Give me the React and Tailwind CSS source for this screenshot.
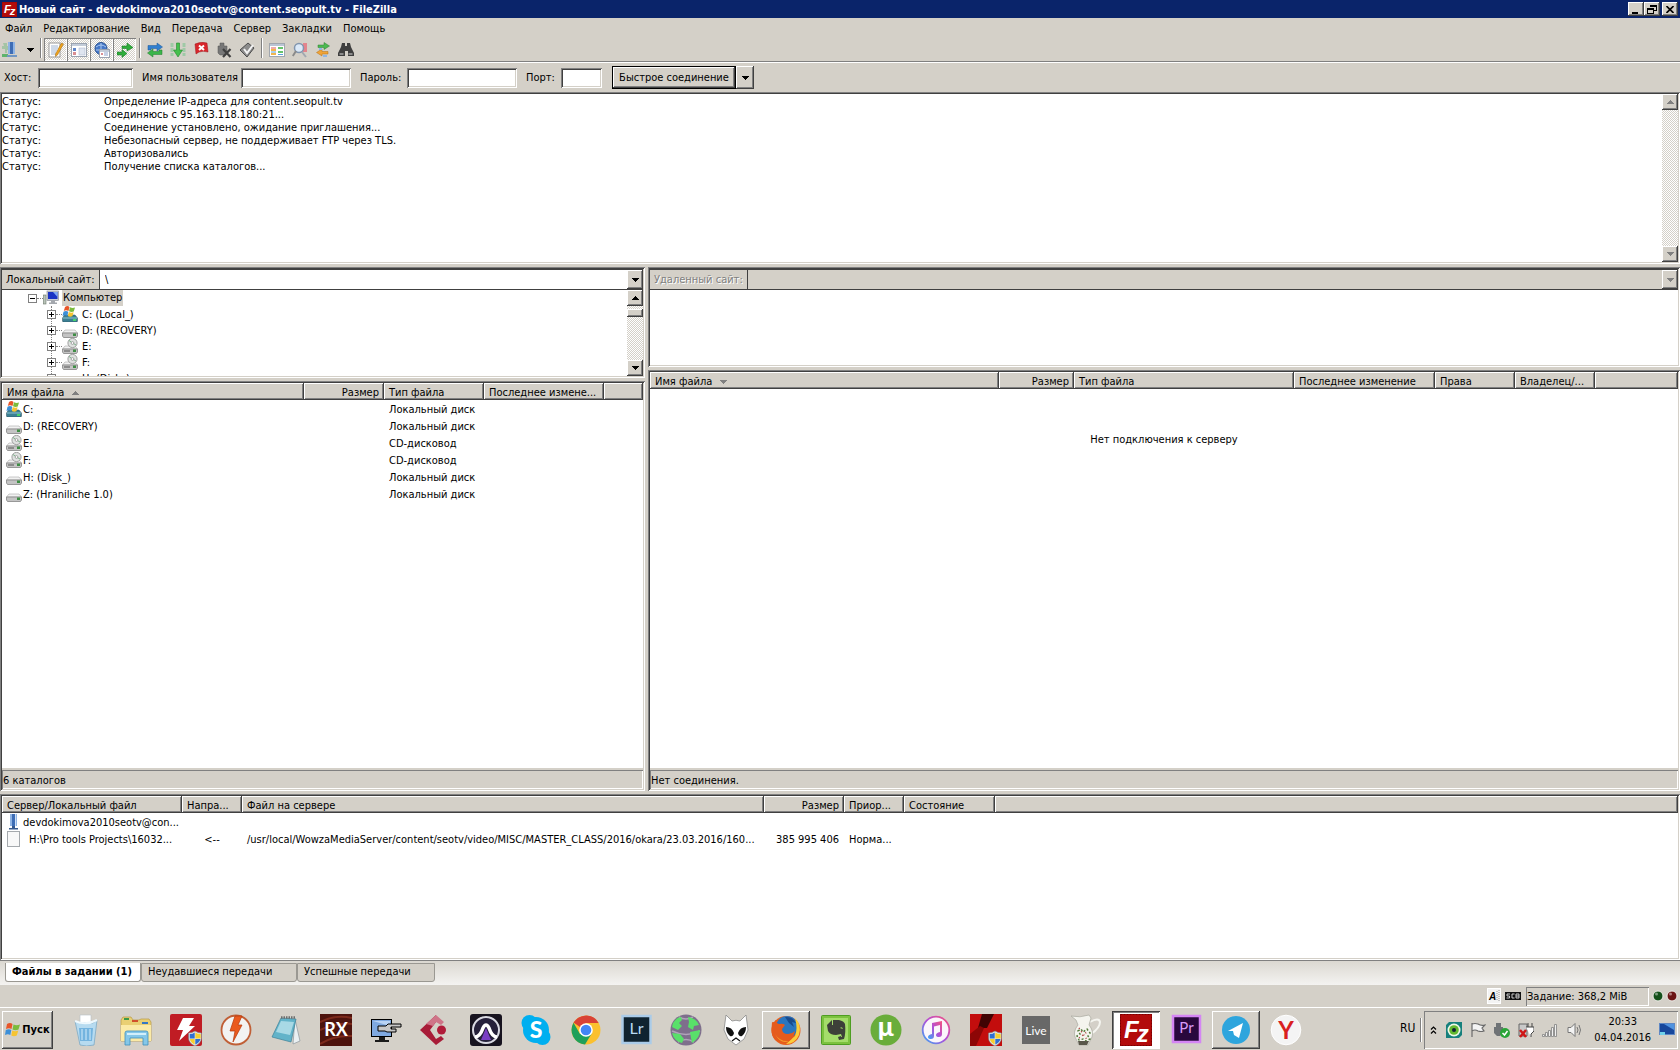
import { useState } from 'react';

const sunken = 'p-[2px] shadow-[inset_1px_1px_0_#808080,inset_-1px_-1px_0_#fff,inset_2px_2px_0_#404040,inset_-2px_-2px_0_#d4d0c8]';
const thinSunken = 'shadow-[inset_1px_1px_0_#808080,inset_-1px_-1px_0_#fff]';
const raised = 'bg-[#d4d0c8] shadow-[inset_-1px_-1px_0_#404040,inset_1px_1px_0_#fff,inset_-2px_-2px_0_#808080]';
const dither = 'bg-[conic-gradient(#fff_25%,#d4d0c8_0_50%,#fff_0_75%,#d4d0c8_0)] bg-[size:2px_2px]';

const menuItems = ['Файл', 'Редактирование', 'Вид', 'Передача', 'Сервер', 'Закладки', 'Помощь'];

const logLines = [
  'Определение IP-адреса для content.seopult.tv',
  'Соединяюсь с 95.163.118.180:21...',
  'Соединение установлено, ожидание приглашения...',
  'Небезопасный сервер, не поддерживает FTP через TLS.',
  'Авторизовались',
  'Получение списка каталогов...',
];

const drives = [
  { name: 'C:', type: 'Локальный диск', icon: 'system' },
  { name: 'D: (RECOVERY)', type: 'Локальный диск', icon: 'disk' },
  { name: 'E:', type: 'CD-дисковод', icon: 'cd' },
  { name: 'F:', type: 'CD-дисковод', icon: 'cd' },
  { name: 'H: (Disk_)', type: 'Локальный диск', icon: 'disk' },
  { name: 'Z: (Hraniliche 1.0)', type: 'Локальный диск', icon: 'disk' },
];

const treeDrives = [
  { name: 'C: (Local_)', icon: 'system' },
  { name: 'D: (RECOVERY)', icon: 'disk' },
  { name: 'E:', icon: 'cd' },
  { name: 'F:', icon: 'cd' },
  { name: 'H: (Disk_)', icon: 'disk' },
];

/* ---------- small icons ---------- */

const Icon16 = ({ children }) => (
  <svg width="16" height="16" viewBox="0 0 16 16" className="block shrink-0" aria-hidden="true">{children}</svg>
);

const DriveIcon = ({ kind }) => (
  <Icon16>
    {kind === 'system' && (
      <g>
        <path d="M.5 12l2-3h10.500l2.500 3v3l-.5 1h-14l-.5-1z" fill="#3b7f93" stroke="#2d4c58" strokeWidth=".5" />
        <path d="M1 12h14" stroke="#8ec6d4" />
        <rect x="11" y="13" width="3" height="2" fill="#45d36b" />
        <path d="M3 1q2.500-2 4.500 0L6.500 5Q4 3.500 1.800 5z" fill="#e8562a" />
        <path d="M8 1.300q2.500 1.200 5 .2l-1.200 4q-2.300 1-4.800-.2z" fill="#7cbb3c" />
        <path d="M1.500 5.800q2.500-1.500 4.800 0l-1 4.200Q3 8.500.5 10z" fill="#3c8fd8" />
        <path d="M6.800 6q2.500 1.200 4.800.2l-1.200 4q-2.400 1-4.600-.2z" fill="#f6c431" />
      </g>
    )}
    {kind !== 'system' && (
      <g>
        <path d="M.5 11l2.500-3h10l2.500 3z" fill="#f1f1f1" stroke="#a8a8a8" strokeWidth=".6" />
        <path d="M.5 11h15v3l-1 1.500h-13l-1-1.500z" fill="#c4c4c4" stroke="#858585" strokeWidth=".8" />
        <rect x="11" y="11.500" width="3" height="2.500" fill="#3f8e45" />
      </g>
    )}
    {kind === 'cd' && (
      <g>
        <circle cx="10.500" cy="5" r="4.600" fill="#dfe2e0" stroke="#8d8d8d" strokeWidth=".8" />
        <path d="M10.500 5L7 2.500M10.500 5l3.500 2" stroke="#7db38a" />
        <circle cx="10.500" cy="5" r="1.400" fill="#fff" stroke="#777" strokeWidth=".6" />
        <path d="M2 13h6" stroke="#555" />
      </g>
    )}
  </Icon16>
);

const ServerIcon = () => (
  <Icon16>
    <path d="M4 0h7v12H4z" fill="#8fb4e4" />
    <path d="M6 0h3v12H6z" fill="#3e6db5" />
    <path d="M9 0h1v12H9z" fill="#cfe0f6" />
    <path d="M6 12h3v2H6zM3 14h9v1.500H3z" fill="#35598f" />
  </Icon16>
);

const SiteManagerIcon = () => (
  <Icon16>
    <path d="M1 1h4v3h3v4h-3v3H3V7H0V4h2z" fill="#a4c4a4" />
    <path d="M0 12h6v3H0z" fill="#5fb36b" />
    <path d="M6 0h7v12H6z" fill="#8fb4e4" />
    <path d="M8 0h3v12H8z" fill="#3e6db5" />
    <path d="M5 13h10v2H5z" fill="#6f96c4" />
  </Icon16>
);

const ComputerIcon = () => (
  <Icon16>
    <rect x="0.500" y="5" width="2.500" height="9" fill="#b9c4b9" stroke="#6c786c" strokeWidth=".6" />
    <rect x="4" y="1" width="11.500" height="9.500" fill="#c8ccd4" stroke="#80858e" strokeWidth=".6" />
    <rect x="5" y="2" width="9.500" height="7" fill="#1a33c4" />
    <path d="M10 2h4.500v5z" fill="#7fa8f2" />
    <path d="M8 10.500h4v2h2v1.500H6v-1.500h2z" fill="#a4a8ae" />
  </Icon16>
);

const FzLogo = ({ size }) => (
  <svg width={size} height={size} viewBox="0 0 32 32" className="block shrink-0" aria-hidden="true">
    <rect width="32" height="32" fill="#b30b0b" />
    <rect x=".5" y=".5" width="31" height="31" fill="none" stroke="#7a0000" strokeDasharray="2 1" />
    <text x="4" y="24" fill="#fff" fontFamily="Liberation Sans, sans-serif" fontWeight="700" fontStyle="italic" fontSize="24">
      F<tspan dx="-2" dy="4">z</tspan>
    </text>
  </svg>
);

const toggles = [
  {
    label: 'Журнал',
    icon: (
      <Icon16>
        <rect x="1" y="1" width="11" height="14" fill="#fff" stroke="#9a9a9a" />
        <path d="M3 4h7M3 6h7M3 8h6M3 10h5M3 12h5" stroke="#9fb4d2" />
        <path d="M13.500 1l2 1-6 11-2 1.500v-2.500z" fill="#f0a41c" stroke="#9a6410" strokeWidth=".5" />
      </Icon16>
    ),
  },
  {
    label: 'Локальное дерево',
    icon: (
      <Icon16>
        <rect x=".5" y="1.500" width="15" height="13" fill="#fff" stroke="#9aa3b0" />
        <path d="M1 2h14v2H1z" fill="#c3ccd9" />
        <rect x="2" y="6" width="3" height="3" fill="#5f86c9" />
        <rect x="2" y="10" width="3" height="3" fill="#d98e92" />
        <rect x="8" y="6" width="6" height="7" fill="#dfe5f0" stroke="#a3b0c9" strokeWidth=".5" />
      </Icon16>
    ),
  },
  {
    label: 'Удаленное дерево',
    icon: (
      <Icon16>
        <circle cx="7" cy="6.500" r="6" fill="#4678c8" stroke="#27508f" />
        <path d="M2 5q5-4 10 0M2 8h10M7 1v11" stroke="#a9c8f0" fill="none" />
        <rect x="5.500" y="7.500" width="10" height="8" fill="#fff" stroke="#9aa3b0" />
        <path d="M6 8h9v2H6z" fill="#c3ccd9" />
        <path d="M10 11h4M10 13h4" stroke="#8ba2cc" />
        <path d="M7 11h2v2H7z" fill="#d98e92" />
      </Icon16>
    ),
  },
  {
    label: 'Очередь',
    icon: (
      <Icon16>
        <path d="M5 4h5V1l6 4.500L10 9V6.500H5z" fill="#2fae3b" stroke="#1b7a27" strokeWidth=".6" />
        <path d="M0 10h5V7.500l5 4-5 4V13H0z" fill="#2fae3b" stroke="#1b7a27" strokeWidth=".6" />
      </Icon16>
    ),
  },
];

const transferTools = [
  {
    label: 'Обновить',
    icon: (
      <Icon16>
        <path d="M1 8V3.500h9V1l5.500 4L10 9V6.500H4V8z" fill="#2f7fd0" stroke="#1b5697" strokeWidth=".5" />
        <path d="M15 8v4.500H6V15L.5 11 6 7v2.500h6V8z" fill="#3bb54a" stroke="#237a2e" strokeWidth=".5" />
      </Icon16>
    ),
  },
  {
    label: 'Обработка очереди',
    icon: (
      <Icon16>
        <path d="M2 1v13M14 1v13" stroke="#9fc9a6" strokeWidth="3" strokeDasharray="4 1" />
        <path d="M6.500 1h3v7h3L8 15 3.500 8h3z" fill="#45bf4c" stroke="#23872c" strokeWidth=".6" />
      </Icon16>
    ),
  },
  {
    label: 'Отменить',
    icon: (
      <Icon16>
        <path d="M2 2q6-3 12-1l1 9q-5-1.500-9 0l-3 2z" fill="#d8262c" stroke="#9d1218" strokeWidth=".5" />
        <path d="M6 3.500l5 4.500M11 3.500L6 8" stroke="#fff" strokeWidth="2" />
      </Icon16>
    ),
  },
  {
    label: 'Отключиться',
    icon: (
      <Icon16>
        <path d="M4 1h4v3h3v6l-3 3H4l-2-2V4h2z" fill="#777" stroke="#555" strokeWidth=".5" />
        <path d="M7 7l7.500 8M14.500 7L7 15" stroke="#3f3f3f" strokeWidth="2.200" />
      </Icon16>
    ),
  },
  {
    label: 'Переподключиться',
    icon: (
      <Icon16>
        <path d="M1 8l8-7 6 5-7 9z" fill="#8c8c8c" stroke="#4b4b4b" />
        <path d="M5 7l3 4 6-8" stroke="#f3f3f3" strokeWidth="2" fill="none" />
      </Icon16>
    ),
  },
];

const viewTools = [
  {
    label: 'Фильтр',
    icon: (
      <Icon16>
        <rect x=".5" y="1.500" width="15" height="13" fill="#fff" stroke="#a0a6ae" />
        <path d="M1 3h14" stroke="#b9c4d4" strokeWidth="2" />
        <path d="M2 6h5" stroke="#e05656" />
        <path d="M2 8h5M2 12h5" stroke="#f0b64c" strokeWidth="2" />
        <path d="M9 6h5M9 10h5" stroke="#65c46c" strokeWidth="2" />
        <path d="M2 10h5M9 12.500h5" stroke="#5aa2dc" />
      </Icon16>
    ),
  },
  {
    label: 'Сравнение каталогов',
    icon: (
      <Icon16>
        <path d="M11 1h4v9h-4z" fill="#e3848c" />
        <circle cx="7" cy="6" r="4.500" fill="#dbe9f8" stroke="#8195ae" strokeWidth="1.500" />
        <path d="M4 9L.8 14" stroke="#8a8a8a" strokeWidth="2" />
        <path d="M10 10l4 5" stroke="#a2a8b0" strokeWidth="2" />
      </Icon16>
    ),
  },
  {
    label: 'Синхронный просмотр',
    icon: (
      <Icon16>
        <path d="M3 3h6V.5L14.500 4 9 7.500V5.500H3z" fill="#4cb951" stroke="#2d8133" strokeWidth=".5" />
        <path d="M13 9.500H7V7L1.500 10.500 7 14v-2h6z" fill="#f0a437" stroke="#b3701a" strokeWidth=".5" />
        <path d="M4 6h3v2H4zM8 13h4v2H8z" fill="#8fb6e6" />
      </Icon16>
    ),
  },
  {
    label: 'Поиск файлов',
    icon: (
      <Icon16>
        <path d="M4 1h3v3h2V1h3l1 4 3 6v3h-6V9H7v5H0v-3l3-6z" fill="#3f3f3f" />
        <path d="M1.500 11h4v2h-4zM10.500 11h4v2h-4z" fill="#8b8b8b" />
      </Icon16>
    ),
  },
];

/* ---------- common pieces ---------- */

const Triangle = ({ up, disabled }) => (
  <svg width="7" height="4" viewBox="0 0 7 4" className="block" aria-hidden="true" shapeRendering="crispEdges">
    <path d={up ? 'M0 4h7L3.500 0z' : 'M0 0h7L3.500 4z'} fill={disabled ? '#808080' : '#000'} />
  </svg>
);

const ArrowButton = ({ up, disabled, label, className = 'h-4' }) => (
  <button aria-label={label} disabled={disabled} className={`flex w-4 shrink-0 items-center justify-center ${raised} ${className}`}>
    <Triangle up={up} disabled={disabled} />
  </button>
);

const ToolButton = ({ label, icon, toggled }) => (
  <button
    aria-label={label}
    title={label}
    className={`flex h-[23px] w-[23px] items-center justify-center ${toggled ? `${dither} ${thinSunken}` : ''}`}
  >
    {icon}
  </button>
);

const ToolSeparator = () => (
  <div className="flex h-5 w-[7px] justify-center" aria-hidden="true">
    <div className="w-[2px] border-r border-l border-r-white border-l-[#808080]" />
  </div>
);

const HeaderRow = ({ columns }) => (
  <>
    <colgroup>
      {columns.map((col) => (
        <col key={col.key} className={col.width} />
      ))}
    </colgroup>
    <thead>
      <tr>
        {columns.map((col) => (
          <th key={col.key} className={`h-[17px] truncate px-[5px] pt-px font-normal ${raised} ${col.right ? 'text-right' : 'text-left'}`}>
            {col.title}
            {col.sort && (
              <span className="ml-2 inline-block align-middle">
                <Triangle up={col.sort === 'asc'} disabled />
              </span>
            )}
          </th>
        ))}
      </tr>
    </thead>
  </>
);

const AddressBar = ({ id, label, value, disabled }) => (
  <div className="flex h-[21px] shrink-0 border-t border-b border-[#404040] bg-[#d4d0c8]">
    <label
      htmlFor={id}
      className={`flex w-[98px] shrink-0 items-center border-r border-[#404040] pl-1 whitespace-nowrap ${disabled ? 'text-[#808080] [text-shadow:1px_1px_0_#fff]' : ''}`}
    >
      {label}
    </label>
    <input id={id} defaultValue={value} disabled={disabled} className={`min-w-0 flex-1 px-[5px] outline-none ${disabled ? 'bg-[#d4d0c8]' : 'bg-white'}`} />
    <ArrowButton label="Открыть список" disabled={disabled} className="h-[19px]" />
  </div>
);

const PaneStatus = ({ children }) => (
  <div className="shrink-0 bg-[#d4d0c8] pt-[2px]">
    <div className={`flex h-[19px] items-center pt-px pl-px ${thinSunken}`}>{children}</div>
  </div>
);

/* ---------- window parts ---------- */

const TitleBar = () => (
  <header className="flex h-[18px] shrink-0 items-center bg-[#0a246a] pr-[2px] pl-[2px] text-white">
    <FzLogo size={15} />
    <h1 className="ml-[2px] flex-1 truncate font-bold">Новый сайт - devdokimova2010seotv@content.seopult.tv - FileZilla</h1>
    <button aria-label="Свернуть" className={`flex h-[14px] w-4 items-center justify-center ${raised}`}>
      <svg width="10" height="9"><path d="M1 7h6v2H1z" /></svg>
    </button>
    <button aria-label="Восстановить" className={`flex h-[14px] w-4 items-center justify-center ${raised}`}>
      <svg width="10" height="9" fill="none" stroke="#000" shapeRendering="crispEdges"><path d="M3 0v2M3 .5h6v5H7M3 1.500h6M.5 3.500h6v5h-6zM1 4.500h6" /></svg>
    </button>
    <button aria-label="Закрыть" className={`ml-[2px] flex h-[14px] w-4 items-center justify-center ${raised}`}>
      <svg width="8" height="7" stroke="#000" strokeWidth="1.600"><path d="M.5 0l7 7M7.500 0l-7 7" /></svg>
    </button>
  </header>
);

const MenuBar = () => (
  <nav className="flex h-5 shrink-0 items-center gap-[11px] pl-[5px]">
    {menuItems.map((item) => (
      <button key={item}>{item}</button>
    ))}
  </nav>
);

const Toolbar = () => (
  <div className="flex h-[25px] shrink-0 items-start border-b border-white shadow-[inset_0_-1px_0_#808080]">
    <button aria-label="Менеджер сайтов" className="flex h-[23px] w-5 items-center justify-center"><SiteManagerIcon /></button>
    <button aria-label="Список сайтов" className="flex h-[23px] w-[17px] items-center justify-center pl-1"><Triangle /></button>
    <ToolSeparator />
    {toggles.map((tool) => <ToolButton key={tool.label} toggled {...tool} />)}
    <ToolSeparator />
    {transferTools.map((tool) => <ToolButton key={tool.label} {...tool} />)}
    <ToolSeparator />
    {viewTools.map((tool) => <ToolButton key={tool.label} {...tool} />)}
  </div>
);

const quickField = `h-5 bg-white px-1 outline-none ${sunken}`;

const QuickConnect = () => (
  <form className="flex h-[29px] shrink-0 items-center pl-1 whitespace-nowrap" onSubmit={(e) => e.preventDefault()}>
    <label htmlFor="host" className="w-[34px]">Хост:</label>
    <input id="host" className={`mr-[9px] w-[95px] ${quickField}`} />
    <label htmlFor="user" className="w-[99px]">Имя пользователя</label>
    <input id="user" className={`mr-[9px] w-[110px] ${quickField}`} />
    <label htmlFor="pass" className="w-[47px]">Пароль:</label>
    <input id="pass" type="password" className={`mr-[9px] w-[110px] ${quickField}`} />
    <label htmlFor="port" className="w-[35px]">Порт:</label>
    <input id="port" className={`mr-[10px] w-[41px] ${quickField}`} />
    <button className="h-[23px] w-[124px] border border-black bg-[#d4d0c8] shadow-[inset_-1px_-1px_0_#404040,inset_1px_1px_0_#fff,inset_-2px_-2px_0_#808080]">Быстрое соединение</button>
    <button type="button" aria-label="История соединений" className={`flex h-[23px] w-[18px] items-center justify-center ${raised}`}><Triangle /></button>
  </form>
);

const MessageLog = () => (
  <section className={`flex h-[172px] shrink-0 bg-white ${sunken}`}>
    <ul className="flex-1 pt-px">
      {logLines.map((line) => (
        <li key={line} className="grid grid-cols-[102px_1fr]">
          <span>Статус:</span>
          <span>{line}</span>
        </li>
      ))}
    </ul>
    <div className={`flex w-4 flex-col justify-between ${dither}`}>
      <ArrowButton up disabled label="Прокрутить вверх" />
      <ArrowButton disabled label="Прокрутить вниз" />
    </div>
  </section>
);

const Expander = ({ open, label }) => (
  <button aria-label={label} className="h-[9px] w-[9px] shrink-0">
    <svg width="9" height="9" className="block" shapeRendering="crispEdges">
      <rect x=".5" y=".5" width="8" height="8" fill="#fff" stroke="#808080" />
      <path d={open ? 'M2 4h5v1H2z' : 'M2 4h5v1H2zM4 2h1v5H4z'} />
    </svg>
  </button>
);

const LocalTree = () => (
  <section className={`flex h-[111px] shrink-0 flex-col bg-white ${sunken}`}>
    <AddressBar id="local-path" label="Локальный сайт:" value="\" />
    <div className="flex min-h-0 flex-1">
      <ul className="flex-1 overflow-hidden">
        <li>
          <div className="flex h-4 items-center pl-[26px]">
            <Expander open label="Свернуть Компьютер" />
            <span className="w-[6px] border-t border-dotted border-[#808080]" />
            <ComputerIcon />
            <span className="ml-[3px] h-4 bg-[#d4d0c8] px-px leading-4">Компьютер</span>
          </div>
          <ul className="ml-[49px] border-l border-dotted border-[#808080]">
            {treeDrives.map((drive) => (
              <li key={drive.name} className="-ml-[5px] flex h-4 items-center">
                <Expander label={`Развернуть ${drive.name}`} />
                <span className="w-[6px] border-t border-dotted border-[#808080]" />
                <DriveIcon kind={drive.icon} />
                <span className="ml-1">{drive.name}</span>
              </li>
            ))}
          </ul>
        </li>
      </ul>
      <div className={`flex w-4 flex-col ${dither}`}>
        <ArrowButton up label="Прокрутить вверх" />
        <div className={`mt-[3px] mb-auto h-2 ${raised}`} />
        <ArrowButton label="Прокрутить вниз" />
      </div>
    </div>
  </section>
);

const LocalList = () => (
  <section className={`flex min-h-0 flex-1 flex-col bg-white ${sunken}`}>
    <div className="min-h-0 flex-1 overflow-hidden">
      <table className="w-full table-fixed">
        <HeaderRow
          columns={[
            { key: 'name', title: 'Имя файла', width: 'w-[302px]', sort: 'asc' },
            { key: 'size', title: 'Размер', width: 'w-[80px]', right: true },
            { key: 'type', title: 'Тип файла', width: 'w-[100px]' },
            { key: 'date', title: 'Последнее измене...', width: 'w-[120px]' },
            { key: 'rest', title: '', width: '' },
          ]}
        />
        <tbody>
          {drives.map((drive) => (
            <tr key={drive.name} className="h-[17px]">
              <td className="pt-px pl-1">
                <div className="flex items-center gap-px">
                  <DriveIcon kind={drive.icon} />
                  {drive.name}
                </div>
              </td>
              <td />
              <td className="pt-px pl-[5px]">{drive.type}</td>
              <td />
              <td />
            </tr>
          ))}
        </tbody>
      </table>
    </div>
    <PaneStatus>6 каталогов</PaneStatus>
  </section>
);

const RemotePanel = () => (
  <div className="flex min-w-0 flex-col gap-[3px]">
    <section className={`h-[100px] shrink-0 bg-white ${sunken}`}>
      <AddressBar id="remote-path" label="Удаленный сайт:" disabled />
    </section>
    <section className={`flex min-h-0 flex-1 flex-col bg-white ${sunken}`}>
      <div className="min-h-0 flex-1 overflow-hidden">
        <table className="w-full table-fixed">
          <HeaderRow
            columns={[
              { key: 'name', title: 'Имя файла', width: 'w-[349px]', sort: 'desc' },
              { key: 'size', title: 'Размер', width: 'w-[75px]', right: true },
              { key: 'type', title: 'Тип файла', width: 'w-[220px]' },
              { key: 'date', title: 'Последнее изменение', width: 'w-[141px]' },
              { key: 'mode', title: 'Права', width: 'w-[80px]' },
              { key: 'owner', title: 'Владелец/...', width: 'w-[80px]' },
              { key: 'rest', title: '', width: '' },
            ]}
          />
        </table>
        <p className="pt-11 text-center">Нет подключения к серверу</p>
      </div>
      <PaneStatus>Нет соединения.</PaneStatus>
    </section>
  </div>
);

const TransferQueue = () => (
  <section className={`h-[166px] shrink-0 overflow-hidden bg-white ${sunken}`}>
    <table className="w-full table-fixed">
      <HeaderRow
        columns={[
          { key: 'local', title: 'Сервер/Локальный файл', width: 'w-[180px]' },
          { key: 'dir', title: 'Напра...', width: 'w-[60px]' },
          { key: 'remote', title: 'Файл на сервере', width: 'w-[522px]' },
          { key: 'size', title: 'Размер', width: 'w-[80px]', right: true },
          { key: 'prio', title: 'Приор...', width: 'w-[60px]' },
          { key: 'state', title: 'Состояние', width: 'w-[91px]' },
          { key: 'rest', title: '', width: '' },
        ]}
      />
      <tbody className="whitespace-nowrap">
        <tr className="h-[17px]">
          <td className="pt-px pl-1" colSpan={7}>
            <div className="flex items-center gap-px"><ServerIcon />devdokimova2010seotv@con...</div>
          </td>
        </tr>
        <tr className="h-[17px]">
          <td className="pt-px pl-1">
            <div className="flex items-center gap-[7px]">
              <Icon16><rect x="1.500" y=".5" width="12" height="15" fill="#f8f8f8" stroke="#a5a9ad" /></Icon16>
              H:\Pro tools Projects\16032...
            </div>
          </td>
          <td className="pt-px text-center">&lt;--</td>
          <td className="pt-px pl-[5px]">/usr/local/WowzaMediaServer/content/seotv/video/MISC/MASTER_CLASS/2016/okara/23.03.2016/160...</td>
          <td className="pt-px pr-[5px] text-right">385 995 406</td>
          <td className="pt-px pl-[5px]">Норма...</td>
          <td />
          <td />
        </tr>
      </tbody>
    </table>
  </section>
);

const tabs = [
  { title: 'Файлы в задании (1)', width: 'w-[136px]' },
  { title: 'Неудавшиеся передачи', width: 'w-[156px]' },
  { title: 'Успешные передачи', width: 'w-[138px]' },
];

const QueueTabs = () => {
  const [active, setActive] = useState(0);

  return (
    <div className="flex h-[25px] shrink-0 items-start border-t border-[#808080] bg-gradient-to-b from-[#dbd8d1] to-[#f4f3f1] pl-[5px]">
      {tabs.map((tab, i) => (
        <button
          key={tab.title}
          onClick={() => setActive(i)}
          className={`mt-[2px] flex h-[19px] items-center rounded-b-[3px] border-r border-b border-l border-[#9a9892] px-[6px] pb-[2px] whitespace-nowrap ${tab.width} ${active === i ? 'bg-white font-bold' : 'border-t bg-[#d4d0c8]'}`}
        >
          {tab.title}
        </button>
      ))}
    </div>
  );
};

const Led = ({ color }) => (
  <svg width="12" height="12" viewBox="0 0 12 12" aria-hidden="true">
    <circle cx="6" cy="6" r="5" fill={color} stroke="#eeece8" />
    <circle cx="4.500" cy="4" r="1.500" fill="#fff" opacity=".45" />
  </svg>
);

const StatusBar = () => (
  <footer className="flex h-[22px] shrink-0 items-center justify-end pr-[2px]">
    <svg width="14" height="16" viewBox="0 0 14 16" className="mr-1" aria-hidden="true">
      <rect x=".5" y=".5" width="13" height="15" fill="#f3f3f3" stroke="#fff" />
      <text x="2" y="12" fontSize="10" fontWeight="700" fontStyle="italic" fontFamily="Liberation Sans, sans-serif">A</text>
      <path d="M10 3v10M12 2v11" stroke="#999" strokeDasharray="1 1" />
    </svg>
    <svg width="16" height="8" viewBox="0 0 16 8" className="mr-[5px]" aria-hidden="true">
      <rect width="16" height="8" fill="#111" />
      <path d="M5 2H2v2h2.500v2H1.500M9.500 2H7v4h2.500M14 2h-3v4h3zM11 4h3" stroke="#ddd" strokeWidth=".9" fill="none" />
    </svg>
    <div className={`mr-[3px] flex h-[19px] w-[123px] items-center pl-px ${thinSunken}`}>Задание: 368,2 MiB</div>
    <div className="flex gap-[2px]">
      <Led color="#14501a" />
      <Led color="#6b1414" />
    </div>
  </footer>
);

/* ---------- taskbar ---------- */

const Shield = () => (
  <g>
    <path d="M25 17q3 2 6.500 2v5q0 5-6.500 8-6.500-3-6.500-8v-5q3.500 0 6.500-2z" fill="#e8e8e8" stroke="#777" strokeWidth=".6" />
    <path d="M24.700 18.500v6h-5v-4.500q3 0 5-1.500zM25.300 25h5.200q-1 3.500-5.200 5.500z" fill="#2f6fd0" />
    <path d="M25.300 18.500v6h5.400v-4.500q-3 0-5.400-1.500zM24.700 25h-5q1 3.500 5 5.500z" fill="#f6cf2e" />
  </g>
);

const IconText = (props) => <text textAnchor="middle" fontFamily="Lato, sans-serif" fill="#fff" {...props} />;

const apps = [
  {
    name: 'Корзина',
    icon: (
      <g>
        <path d="M10 1h11v9H10z" fill="#fff" stroke="#b5bfc8" strokeWidth=".6" />
        <path d="M5 7l6 2h12l4-3-3 25q-8 2-14 0z" fill="#b7dbf0" stroke="#7da9c4" strokeWidth=".8" />
        <path d="M9 14h14l-1 13H10z" fill="#74b4df" />
        <path d="M12 15v11M16 15v11M20 15v11" stroke="#d5edfb" />
        <path d="M5 7q11 5 22-1" fill="none" stroke="#eef8fd" strokeWidth="2" />
      </g>
    ),
  },
  {
    name: 'Проводник',
    icon: (
      <g>
        <path d="M1 6l2-3h8l2 3h6l2-1h8l2 3v19H1z" fill="#e9cf73" stroke="#b89a43" strokeWidth=".7" />
        <path d="M4 4h5v2H4z" fill="#3c9a48" />
        <path d="M12 6h6v2h-6z" fill="#d1502c" />
        <path d="M22 8h6v2h-6z" fill="#3577c4" />
        <path d="M1 11h30v16H1z" fill="#fbeaa6" />
        <path d="M5 31V19q0-2 2-2h19q2 0 2 2v12h-5v-7H10v7z" fill="#85c7e8" stroke="#3f8fbd" strokeWidth=".8" />
        <path d="M7 20h19" stroke="#d2effb" strokeWidth="2" />
      </g>
    ),
  },
  {
    name: 'DAEMON Tools',
    icon: (
      <g>
        <rect width="32" height="32" rx="2" fill="#c01c24" />
        <path d="M13 4h11l-5 8h6L9 27l4-11H7z" fill="#fff" />
        <Shield />
      </g>
    ),
  },
  {
    name: 'DAEMON Tools Lite',
    icon: (
      <g>
        <circle cx="16" cy="16" r="14.500" fill="#f3f3f2" stroke="#c05f36" strokeWidth="1.800" />
        <path d="M15 2h7l-4 9h4L13 28l2-11h-5z" fill="#ea5a1e" stroke="#b5380c" strokeWidth=".7" />
      </g>
    ),
  },
  {
    name: 'Блокнот',
    icon: (
      <g>
        <path d="M25 5l5 22-7 3z" fill="#eaf0f2" stroke="#8c979c" strokeWidth=".7" />
        <path d="M11 4l15 1-5 23-19-5z" fill="#62b3c9" stroke="#3d8198" strokeWidth=".7" />
        <path d="M11 7l13 1-4 13-14-3z" fill="#a8d9e5" />
        <path d="M11 3.500h15" stroke="#6e6e6e" strokeWidth="2.500" strokeDasharray="1.500 1" />
      </g>
    ),
  },
  {
    name: 'iZotope RX',
    icon: (
      <g>
        <rect width="32" height="32" fill="#4d130d" />
        <path d="M0 8q16-8 32-4M0 16q18-8 32-6M0 30q14-9 32-8" stroke="#7c2a1c" strokeWidth="2" fill="none" />
        <IconText x="16" y="22" fontSize="18" fontWeight="700">RX</IconText>
      </g>
    ),
  },
  {
    name: 'Удаленный рабочий стол',
    icon: (
      <g>
        <rect x="1.500" y="5.500" width="20" height="17" fill="#7fa9e0" stroke="#000" />
        <path d="M3 7h17v5z" fill="#b9d3f4" />
        <path d="M9 23h6v3h4v2H5v-2h4z" fill="#1a1a1a" />
        <path d="M8 12h8l2-2h13v3H21v2h5v3h-9l-2-1H8z" fill="#c7c7c7" stroke="#000" />
      </g>
    ),
  },
  {
    name: 'Cubase',
    icon: (
      <g>
        <path d="M16 1v7l-6 8 6 9 5-3 3 3-8 6L0 16z" fill="#a81c38" />
        <path d="M16 1l8 7-3 3-5-3-3 4-7-2z" fill="#cf7488" />
        <circle cx="21.500" cy="16" r="4.500" fill="#b01b39" />
      </g>
    ),
  },
  {
    name: 'Pro Tools',
    icon: (
      <g>
        <rect width="32" height="32" rx="3" fill="#17131f" />
        <circle cx="16" cy="16" r="13" fill="#25203a" stroke="#d9d9e2" strokeWidth="2" />
        <path d="M11 26l5-12 5 12z" fill="#7a3fc4" />
        <path d="M5 23q5 0 8-9 3-6 6 0 3 9 8 9" fill="none" stroke="#fff" strokeWidth="3.500" />
      </g>
    ),
  },
  {
    name: 'Skype',
    icon: (
      <g>
        <circle cx="16" cy="16" r="13" fill="#00aff0" />
        <circle cx="9.500" cy="9" r="8" fill="#00aff0" />
        <circle cx="22.500" cy="23" r="8" fill="#00aff0" />
        <IconText x="16" y="24" fontSize="23" fontWeight="900">S</IconText>
      </g>
    ),
  },
  {
    name: 'Google Chrome',
    icon: (
      <g>
        <circle cx="16" cy="16" r="14.500" fill="#fbc02d" />
        <path d="M3.500 8.700A14.500 14.500 0 0 0 15 30.500L22 19 10 20z" fill="#1fa05a" />
        <path d="M28.600 9H16l-6 4-6.500-4.500Q9 1 17 1.500 25 2 28.600 9z" fill="#d94235" />
        <circle cx="16" cy="16" r="6.800" fill="#fff" />
        <circle cx="16" cy="16" r="5.300" fill="#4285f4" />
      </g>
    ),
  },
  {
    name: 'Lightroom',
    icon: (
      <g>
        <rect x="2.500" y="2" width="28" height="27" fill="#0f2330" stroke="#aacbe8" strokeWidth="2.500" />
        <IconText x="16.500" y="20" fontSize="16" fill="#b7dbf3">Lr</IconText>
      </g>
    ),
  },
  {
    name: 'Tor Browser',
    icon: (
      <g>
        <circle cx="16" cy="16" r="15.500" fill="#7e6f8c" />
        <path d="M9 3q7 4 14 0M2 17q14 7 28 0M8 28q8-5 16 0" fill="none" stroke="#b0a4ba" strokeWidth="1.500" />
        <path d="M3 9q4-6 8-6l1 3-3 3 3 3-4 4-6-3zM18 3q8 1 11 8l-5 1-1 4-5-3 1-5zM20 18l10-2q0 8-8 13l-1-5zM2 19l8 1 4 5-2 4q-8-2-10-10z" fill="#59e06a" />
      </g>
    ),
  },
  {
    name: 'foobar2000',
    icon: (
      <g>
        <path d="M6 1l6 6q4-1.500 8 0l6-6 2 15-4 9-8 6-8-6-4-9z" fill="#fff" stroke="#8a8a8a" strokeWidth=".8" />
        <path d="M6 13q6 0 8 6-1 4-4 3-4-3-4-9zM26 13q-6 0-8 6 1 4 4 3 4-3 4-9z" fill="#111" />
        <path d="M12 27l4-3 4 3" fill="none" stroke="#111" strokeWidth="1.200" />
      </g>
    ),
  },
  {
    name: 'Firefox',
    state: 'open',
    icon: (
      <g>
        <circle cx="16" cy="16.500" r="14.500" fill="#e8601c" />
        <circle cx="17" cy="13" r="11" fill="#2a76c0" />
        <path d="M15 3q8-1 11 6l-4-1 2 5-5-4z" fill="#194b8d" />
        <path d="M25 4q7 7 4 17-4 9-13 9l9-8q3-8 0-18z" fill="#fbcd3b" />
        <path d="M2 8q2 1 4-2 0 3 3 4 4-1 6 1l-3 4q0 5 6 5 4 0 7-3-2 10-10 12Q1 28 1.500 15z" fill="#e55b1d" />
        <path d="M5 20q5 8 14 7-8 4-14-7z" fill="#f49a2a" />
      </g>
    ),
  },
  {
    name: 'Evernote',
    icon: (
      <g>
        <rect x="1" y="1" width="30" height="30" rx="2" fill="#4e9e22" />
        <rect x="3" y="3" width="26" height="26" fill="#a4dd6a" stroke="#7cc23f" strokeWidth="2" />
        <path d="M13 6h6q5 1 6 4 1 9-1 15l-5 1-1-3 3-1v1h1l-1-3-5 1q-6 0-8-4l-1-6h6z" fill="#3d4039" />
        <path d="M12 6v5H7z" fill="#3d4039" />
        <path d="M20 14q2-2 3 1z" fill="#a4dd6a" />
      </g>
    ),
  },
  {
    name: 'µTorrent',
    icon: (
      <g>
        <circle cx="16" cy="16" r="15.500" fill="#69ad3b" />
        <IconText x="16" y="22" fontSize="26" fontWeight="900">µ</IconText>
      </g>
    ),
  },
  {
    name: 'iTunes',
    icon: (
      <g>
        <defs>
          <linearGradient id="tunes" x1="0" x2="1" y1="1" y2="0">
            <stop offset="0" stopColor="#3aa9f4" />
            <stop offset=".5" stopColor="#b04fd8" />
            <stop offset="1" stopColor="#f6547c" />
          </linearGradient>
        </defs>
        <circle cx="16" cy="16" r="13.300" fill="#fbf6fb" stroke="url(#tunes)" strokeWidth="1.800" />
        <path d="M12 9l10-2v13q0 3-3 3t-3-2 4-3v-7l-6 1.500V22q0 3-3 3t-3-2 4-3z" fill="url(#tunes)" />
      </g>
    ),
  },
  {
    name: 'Adobe Application Manager',
    icon: (
      <g>
        <rect width="32" height="32" fill="#c30d0d" />
        <path d="M12 0h12l-7 14H8z" fill="#2a0202" opacity=".85" />
        <path d="M0 20l10-8 4 2-8 18H0z" fill="#8d0606" />
        <Shield />
      </g>
    ),
  },
  {
    name: 'Ableton Live',
    icon: (
      <g>
        <rect x="2" y="2" width="28" height="28" fill="#686868" />
        <IconText x="16" y="21" fontSize="12">Live</IconText>
      </g>
    ),
  },
  {
    name: 'Кувшин',
    icon: (
      <g>
        <path d="M20 8q9-5 10 0 0 6-9 12" fill="none" stroke="#f5f5f0" strokeWidth="2" />
        <path d="M1 2q9 2 18-1l2 3-2 7q5 6 3 12l-4 8H9l-4-8q-2-6 3-12L6 6z" fill="#f4f4ee" stroke="#a9a99f" strokeWidth=".7" />
        <path d="M8 17l3-2 2 3 4-3 3 4-2 3 2 3-4 2-3-2-4 1-2-4 3-2z" fill="none" stroke="#557a3c" strokeWidth="1.500" strokeDasharray="2 2" />
        <path d="M9 14l9 13M9 24l8-6" stroke="#ad3a3a" strokeWidth="1.500" strokeDasharray="1 3" />
        <path d="M8 27h11l-2 4H9z" fill="#59564a" />
      </g>
    ),
  },
  { name: 'FileZilla', state: 'active', icon: null },
  {
    name: 'Premiere Pro',
    icon: (
      <g>
        <rect x="3" y="2" width="27" height="26" fill="#29083d" stroke="#d485f4" strokeWidth="2.500" />
        <IconText x="16.500" y="19" fontSize="15" fill="#d89bf7">Pr</IconText>
      </g>
    ),
  },
  {
    name: 'Telegram',
    state: 'open',
    icon: (
      <g>
        <circle cx="16" cy="16" r="14" fill="#2ea5dd" />
        <path d="M8 17l15-8-4 15-5-3-1-4z" fill="#fff" />
      </g>
    ),
  },
  {
    name: 'Яндекс',
    icon: (
      <g>
        <circle cx="16" cy="16" r="14.800" fill="#f4f4f4" stroke="#fff" />
        <IconText x="16" y="25" fontSize="24" fontWeight="700" fill="#d9201f">Y</IconText>
      </g>
    ),
  },
];

const appState = {
  open: raised,
  active: 'bg-white shadow-[inset_1px_1px_0_#404040,inset_-1px_-1px_0_#fff,inset_2px_2px_0_#808080]',
};

const trayIcons = [
  {
    name: 'Антивирус',
    icon: (
      <g>
        <path d="M0 3l3-3h13v13l-3 3H0z" fill="#16807c" />
        <circle cx="8" cy="8" r="6.500" fill="#eef8e8" />
        <circle cx="8" cy="8" r="4.800" fill="#62b82f" />
        <circle cx="8" cy="8" r="2" fill="#123" />
      </g>
    ),
  },
  {
    name: 'Центр поддержки',
    icon: <path d="M2 1v14M2 2q3-1 6 0 3 2 7 1l-3 3 2 3q-3 1-6 0-3-2-6 0" fill="#f4f4f4" stroke="#6b6b6b" strokeWidth="1.200" />,
  },
  {
    name: 'Безопасное извлечение',
    icon: (
      <g>
        <path d="M2 1h5v4H2zM0 5h9v6l-3 3H3l-3-3z" fill="#6f7376" />
        <circle cx="11" cy="11" r="5" fill="#2aa538" />
        <path d="M8.500 11l2 2 3-4" fill="none" stroke="#fff" strokeWidth="1.500" />
      </g>
    ),
  },
  {
    name: 'Питание',
    icon: (
      <g>
        <path d="M1 2h8v12H1z" fill="#c9c9c9" stroke="#666" />
        <path d="M10 1v4M14 1v4M8 5h8v4l-3 3v3" fill="#fff" stroke="#444" />
        <path d="M2 8l6 7M8 8l-6 7" stroke="#cf1717" strokeWidth="2.500" />
      </g>
    ),
  },
  {
    name: 'Сеть',
    icon: <path d="M.5 12.500h2v2h-2zM3.500 10.500h2v4h-2zM6.500 8.500h2v6h-2zM9.500 5.500h2v9h-2zM12.500 2.500h2v12h-2z" fill="#f0f0f0" stroke="#808080" strokeWidth=".8" />,
  },
  {
    name: 'Громкость',
    icon: (
      <g fill="none" stroke="#777">
        <path d="M2 5.500h3l4-4v13l-4-4H2z" fill="#f3f3f3" />
        <path d="M11 5q2 3 0 6M13 3q3 5 0 10" />
      </g>
    ),
  },
];

const Taskbar = () => (
  <div className="flex h-[43px] shrink-0 items-center border-t border-white pt-px pr-[2px] pl-[2px]">
    <button className={`mr-[9px] flex h-[38px] w-[51px] items-center justify-center gap-px font-bold ${raised}`}>
      <svg width="16" height="15" viewBox="0 0 16 15" aria-hidden="true">
        <path d="M2 2q3-2 5.500 0L6.500 7Q4 5.500 1 7z" fill="#e8562a" />
        <path d="M8.500 2.500q3 1.500 6.500 0l-1.500 5q-3 1.500-6 0z" fill="#7cbb3c" />
        <path d="M.8 8Q4 6.500 6.300 8l-1 5Q3 11.500 0 13z" fill="#3c8fd8" />
        <path d="M7.300 8.500q3 1.500 6 0l-1.500 5q-3 1.500-5.500 0z" fill="#f6c431" />
      </svg>
      Пуск
    </button>
    <div className="flex flex-1 gap-[2px]">
      {apps.map((app) => (
        <button
          key={app.name}
          aria-label={app.name}
          className={`flex h-[38px] w-12 shrink-0 items-center justify-center ${app.state ? appState[app.state] : ''}`}
        >
          {app.icon ? <svg width="32" height="32" viewBox="0 0 32 32" aria-hidden="true">{app.icon}</svg> : <FzLogo size={32} />}
        </button>
      ))}
    </div>
    <button aria-label="Язык ввода RU" className="mr-1 px-px pb-1 text-xs">RU</button>
    <div className="mr-[2px] h-6 w-[2px] border-r border-l border-r-white border-l-[#808080]" />
    <div className={`flex h-[38px] items-center pr-[3px] pl-[6px] ${thinSunken}`}>
      <button aria-label="Показать скрытые значки">
        <svg width="7" height="8" viewBox="0 0 7 8" fill="none" stroke="#000" strokeWidth="1.200"><path d="M1 3.500L3.500 1 6 3.500M1 7.500L3.500 5 6 7.500" /></svg>
      </button>
      <div className="ml-[9px] flex gap-2">
        {trayIcons.map((item) => (
          <button key={item.name} aria-label={item.name}>
            <svg width="16" height="16" viewBox="0 0 16 16" className="block">{item.icon}</svg>
          </button>
        ))}
      </div>
      <div className="mr-2 ml-3 text-center leading-4">
        <div>20:33</div>
        <div>04.04.2016</div>
      </div>
      <button aria-label="Свернуть все окна">
        <svg width="16" height="13" viewBox="0 0 16 13" className="block">
          <rect x=".5" y=".5" width="15" height="11" fill="#17479c" stroke="#5e87c4" />
          <path d="M5 1h10v6z" fill="#4f93e0" />
          <rect x="1" y="9" width="5" height="3" fill="#6fd1ea" />
        </svg>
      </button>
    </div>
  </div>
);

const App = () => (
  <div className="flex h-screen flex-col overflow-hidden bg-[#d4d0c8] font-['DejaVu_Sans_Condensed','DejaVu_Sans',sans-serif] text-[11px] leading-[13px] text-black">
    <TitleBar />
    <MenuBar />
    <Toolbar />
    <QuickConnect />
    <MessageLog />
    <main className="grid min-h-0 flex-1 grid-cols-[645fr_1032fr] gap-x-[3px] py-[3px]">
      <div className="flex min-h-0 min-w-0 flex-col gap-[3px]">
        <LocalTree />
        <LocalList />
      </div>
      <RemotePanel />
    </main>
    <TransferQueue />
    <QueueTabs />
    <StatusBar />
    <Taskbar />
  </div>
);

export default App;
